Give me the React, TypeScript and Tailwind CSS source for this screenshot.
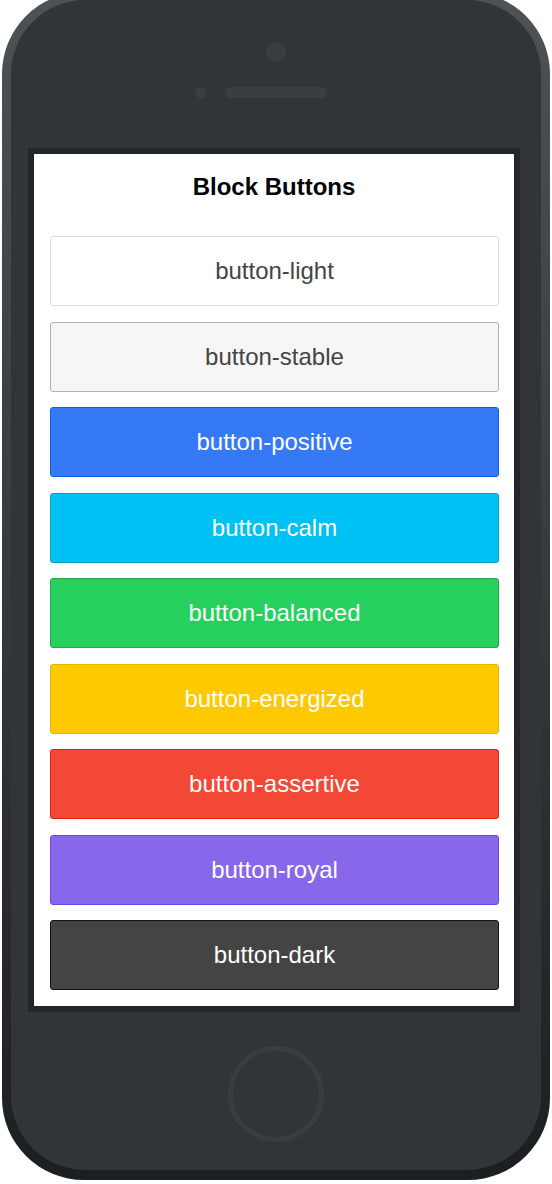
const buttons = [
  { label: "button-light", cls: "bg-white border-[#dddddd] text-[#444444]" },
  { label: "button-stable", cls: "bg-[#f6f6f6] border-[#b2b2b2] text-[#444444]" },
  { label: "button-positive", cls: "bg-[#3579f6] border-[#0c60ee] text-white" },
  { label: "button-calm", cls: "bg-[#00c1f3] border-[#0a9dc7] text-white" },
  { label: "button-balanced", cls: "bg-[#26d05c] border-[#28a54c] text-white" },
  { label: "button-energized", cls: "bg-[#ffc900] border-[#e6b500] text-white" },
  { label: "button-assertive", cls: "bg-[#f24835] border-[#e42112] text-white" },
  { label: "button-royal", cls: "bg-[#8767ea] border-[#6b46e5] text-white" },
  { label: "button-dark", cls: "bg-[#444444] border-[#111111] text-white" },
]

export default function App() {
  return (
    <div className="w-[552px] h-[1184px] bg-white overflow-hidden" style={{ fontFamily: '"Liberation Sans", Arial, sans-serif' }}>
      <div className="ml-[2px] -mt-[8px] w-[548px] h-[1188px] rounded-[82px] bg-gradient-to-b from-[#4d5257] via-[#353a3e] to-[#1c1f22] px-[9px] pt-[8px] pb-[10px]">
        <div className="h-full rounded-[74px] bg-[#323538] flex flex-col items-center">
          {/* camera */}
          <div className="mt-[42px] w-[20px] h-[20px] rounded-full bg-[#3b3e41]" />
          {/* sensor + speaker */}
          <div className="mt-[25px] flex items-center gap-[19px]">
            <div className="w-[11px] h-[11px] rounded-full bg-[#3b3e41]" />
            <div className="w-[102px] h-[11px] rounded-full bg-[#3b3e41]" />
            <div className="w-[11px] h-[11px]" />
          </div>

          {/* screen */}
          <div className="mt-[50px] mr-[4px] w-[492px] bg-[#22262b] p-[6px]">
            <div className="h-[852px] bg-white">
              <div className="h-[66px] flex items-center justify-center text-[24px] font-bold text-black">
                Block Buttons
              </div>
              <div className="pt-4 pl-4 pr-[15px] flex flex-col gap-[15.5px]">
                {buttons.map((b) => (
                  <div
                    key={b.label}
                    className={`h-[70px] border rounded-[3px] flex items-center justify-center text-[24px] ${b.cls}`}
                  >
                    {b.label}
                  </div>
                ))}
              </div>
            </div>
          </div>

          {/* home button */}
          <div className="mt-[34px] w-[96px] h-[96px] rounded-full border-[5px] border-[#3a3d40]" />
        </div>
      </div>
    </div>
  )
}
